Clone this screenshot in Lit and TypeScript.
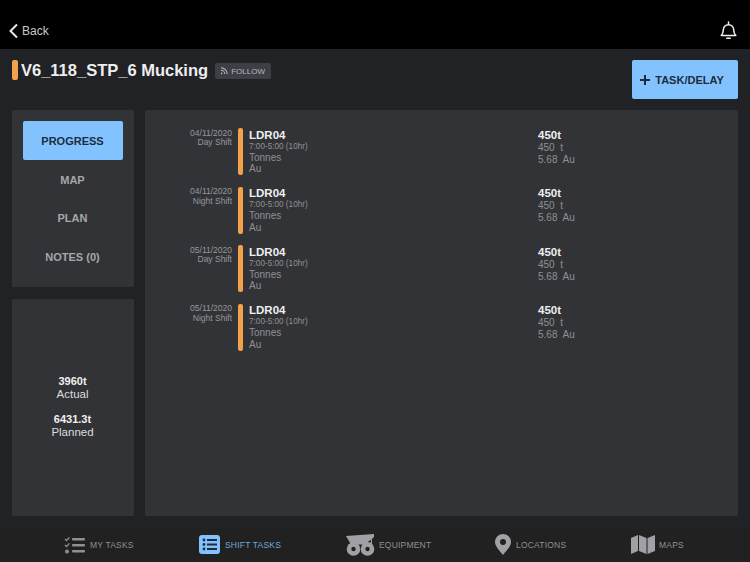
import { LitElement, html, css } from "lit";
import { customElement } from "lit/decorators.js";

const rows = [
  ["04/11/2020", "Day Shift"],
  ["04/11/2020", "Night Shift"],
  ["05/11/2020", "Day Shift"],
  ["05/11/2020", "Night Shift"],
];

@customElement("app-root")
export class AppRoot extends LitElement {
  static styles = css`
    :host { display: block; width: 750px; height: 562px; overflow: hidden; font-family: "Liberation Sans", Arial, sans-serif; background: #202226; color: #fff; }
    * { box-sizing: border-box; }
    .page { display: flex; flex-direction: column; height: 562px; }
    .top { height: 49px; background: #000; display: flex; align-items: flex-end; justify-content: space-between; padding: 0 13px 9px 9px; flex: none; }
    .back { display: flex; align-items: center; gap: 4px; font-size: 12px; color: #c9c9cb; height: 20px; padding-top: 1px; }
    .body { flex: 1; display: flex; flex-direction: column; padding: 11px 12px; min-height: 0; }
    .head { height: 39px; display: flex; justify-content: space-between; flex: none; }
    .title-wrap { display: flex; align-items: flex-start; }
    .accent { width: 6px; height: 20px; background: #f2a24a; border-radius: 2px; margin-right: 3px; }
    .title { font-size: 16.5px; font-weight: 700; line-height: 21px; color: #eeeeef; }
    .follow { margin: 3px 0 0 7px; width: 56px; height: 16px; background: #3c3f45; border-radius: 2px; display: flex; align-items: center; justify-content: center; gap: 3px; font-size: 8px; color: #b9babd; padding-right: 1px; }
    .task { width: 106px; height: 39px; background: #82c3ff; border-radius: 2px; display: flex; align-items: center; justify-content: center; gap: 5px; color: #1d2c3d; font-size: 11px; font-weight: 700; padding-right: 6px; }
    .main { flex: 1; display: flex; gap: 11px; margin-top: 11px; min-height: 0; }
    .left { width: 122px; display: flex; flex-direction: column; gap: 12px; flex: none; }
    .panel { background: #323337; border-radius: 2px; }
    .nav { height: 177px; padding: 11px; display: flex; flex-direction: column; }
    .nav div { height: 38.7px; padding: 1px 1px 0 0; display: flex; align-items: center; justify-content: center; font-size: 11px; font-weight: 700; color: #a6a7aa; border-radius: 2px; flex: none; }
    .nav .on { background: #82c3ff; color: #1d2c3d; }
    .stats { flex: 1; display: flex; flex-direction: column; align-items: center; justify-content: center; font-size: 11.5px; color: #dcdcde; line-height: 13px; padding: 0 1px 2px 0; }
    .stats b { color: #f0f0f0; font-size: 11px; }
    .stats .gap { height: 12px; }
    .list { flex: 1; min-width: 0; padding: 18px 0 0 0; display: flex; flex-direction: column; gap: 11.5px; }
    .row { display: flex; height: 47px; }
    .date { width: 87px; text-align: right; font-size: 8.5px; line-height: 9.5px; color: #96979b; padding-top: .9px; flex: none; }
    .bar { width: 5px; height: 47px; background: #f2a24a; border-radius: 2px; margin: 0 6px; flex: none; }
    .info { width: 289px; flex: none; font-size: 10px; color: #8f9094; line-height: 11.5px; padding-top: .9px; }
    .vals { flex: 1; min-width: 0; font-size: 10px; color: #8f9094; line-height: 12px; padding-top: .9px; }
    .name { font-size: 11.5px; font-weight: 700; color: #efeff0; line-height: 13px; }
    .info .sub { font-size: 8.2px; line-height: 10px; }
    .tabs { height: 35px; background: #212121; flex: none; display: flex; align-items: center; padding-left: 64px; font-size: 8.5px; color: #8f9094; letter-spacing: .2px; }
    .tab { display: flex; align-items: center; gap: 4px; flex: none; }
    .tab.on { color: #6fa9dc; }
    .t1 { width: 135px; } .t2 { width: 147px; gap: 5px; } .t3 { width: 149px; } .t4 { width: 136px; gap: 5px; }
  `;

  render() {
    return html`<div class="page">
      <div class="top">
        <div class="back">
          <svg width="9" height="16" viewBox="0 0 9 16"><path d="M8 1.500 1.500 8 8 14.500" fill="none" stroke="#e8e8e8" stroke-width="2"/></svg>
          <span>Back</span>
        </div>
        <svg width="17" height="19" viewBox="0 0 17 19" fill="none" stroke="#f2f2f2" stroke-width="1.5">
          <path d="M1.200 14.500c1.600-1.600 2.100-3 2.100-5.400 0-3 2-5.400 5.200-5.400s5.200 2.400 5.200 5.400c0 2.400.5 3.800 2.100 5.400z" stroke-linejoin="round"/>
          <path d="M8.500 1v2M6.800 17.300h3.400" stroke-linecap="round"/>
        </svg>
      </div>
      <div class="body">
        <div class="head">
          <div class="title-wrap">
            <div class="accent"></div>
            <div class="title">V6_118_STP_6 Mucking</div>
            <div class="follow">
              <svg width="8" height="8" viewBox="0 0 8 8" fill="none" stroke="#b9babd" stroke-width="1.100"><path d="M1 .8A6.200 6.200 0 0 1 7.200 7M1 3.300A3.700 3.700 0 0 1 4.700 7"/><circle cx="1.600" cy="6.400" r=".8" fill="#b9babd" stroke="none"/></svg>
              <span>FOLLOW</span>
            </div>
          </div>
          <div class="task">
            <svg width="10" height="10" viewBox="0 0 10 10"><path d="M5 0v10M0 5h10" stroke="#1d2c3d" stroke-width="2"/></svg>
            <span>TASK/DELAY</span>
          </div>
        </div>
        <div class="main">
          <div class="left">
            <div class="panel nav">
              <div class="on">PROGRESS</div><div>MAP</div><div>PLAN</div><div>NOTES (0)</div>
            </div>
            <div class="panel stats">
              <b>3960t</b><span>Actual</span><div class="gap"></div><b>6431.3t</b><span>Planned</span>
            </div>
          </div>
          <div class="panel list">
            ${rows.map(([d, s]) => html`<div class="row">
              <div class="date">${d}<br />${s}</div>
              <div class="bar"></div>
              <div class="info"><div class="name">LDR04</div><div class="sub">7:00-5:00 (10hr)</div><div>Tonnes</div><div>Au</div></div>
              <div class="vals"><div class="name">450t</div><div>450&nbsp; t</div><div>5.68&nbsp; Au</div></div>
            </div>`)}
          </div>
        </div>
      </div>
      <div class="tabs">
        <div class="tab t1">
          <svg width="22" height="18" viewBox="0 0 22 18" fill="#8f9094"><path d="M1 3 2.600 4.600 5.400 1.400" fill="none" stroke="#8f9094" stroke-width="1.400"/><path d="M1 9 2.600 10.600 5.400 7.400" fill="none" stroke="#8f9094" stroke-width="1.400"/><circle cx="3" cy="15.500" r="2"/><rect x="8" y="2" width="13" height="2.400" rx="1"/><rect x="8" y="8" width="13" height="2.400" rx="1"/><rect x="8" y="14" width="13" height="2.400" rx="1"/></svg>
          <span>MY TASKS</span>
        </div>
        <div class="tab t2 on">
          <svg width="21" height="19" viewBox="0 0 21 19"><rect width="21" height="19" rx="3" fill="#82c3ff"/><g fill="#1d2c3d"><circle cx="5" cy="5" r="1.400"/><circle cx="5" cy="9.500" r="1.400"/><circle cx="5" cy="14" r="1.400"/><rect x="8" y="4" width="10" height="2"/><rect x="8" y="8.500" width="10" height="2"/><rect x="8" y="13" width="10" height="2"/></g></svg>
          <span>SHIFT TASKS</span>
        </div>
        <div class="tab t3">
          <svg width="29" height="22" viewBox="0 0 29 22">
            <path d="M0 2 28 0 28 3 20 10.500 5 10.500z" fill="#a0a1a5"/>
            <path d="M19 10 26 5 26 10z" fill="#a0a1a5"/>
            <path d="M21 8.500 25 5.800 25 8.500z" fill="#212121"/>
            <circle cx="7.500" cy="15" r="6.800" fill="#a0a1a5"/><circle cx="21.500" cy="15" r="6.800" fill="#a0a1a5"/>
            <circle cx="7.500" cy="15" r="2.200" fill="#212121"/><circle cx="21.500" cy="15" r="2.200" fill="#212121"/>
          </svg>
          <span>EQUIPMENT</span>
        </div>
        <div class="tab t4">
          <svg width="16" height="21" viewBox="0 0 16 21"><path fill-rule="evenodd" d="M8 0a8 8 0 0 1 8 8c0 4.500-5 9-8 13C5 17 0 12.500 0 8a8 8 0 0 1 8-8zm0 5a3 3 0 1 0 0 6 3 3 0 0 0 0-6z" fill="#a0a1a5"/></svg>
          <span>LOCATIONS</span>
        </div>
        <div class="tab">
          <svg width="24" height="19" viewBox="0 0 24 19" fill="#a0a1a5"><path d="M0 3 7 0v16L0 19z"/><path d="M8 0l7.500 3v16L8 16z"/><path d="M16.500 3 24 0v16l-7.500 3z"/></svg>
          <span>MAPS</span>
        </div>
      </div>
    </div>`;
  }
}
